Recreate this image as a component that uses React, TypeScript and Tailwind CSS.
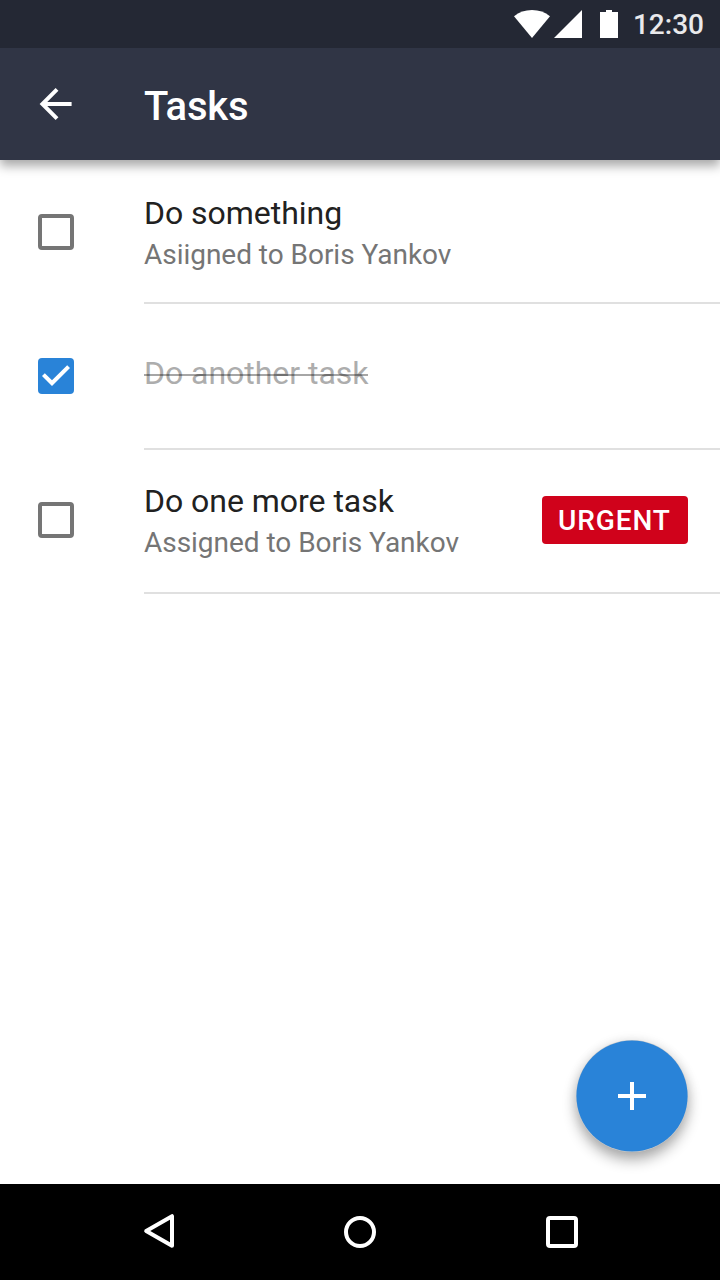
type Task = {
  title: string;
  note?: string;
  done?: boolean;
  urgent?: boolean;
  row: string;
  box: string;
  text: string;
};

const tasks: Task[] = [
  { title: "Do something", note: "Asiigned to Boris Yankov", row: "h-[144px]", box: "mt-[54px]", text: "pt-[33px]" },
  { title: "Do another task", done: true, row: "h-[146px]", box: "mt-[54px]", text: "pt-[49px]" },
  { title: "Do one more task", note: "Assigned to Boris Yankov", urgent: true, row: "h-[144px]", box: "mt-[52px]", text: "pt-[31px]" },
];

function StatusBar() {
  return (
    <div className="relative z-20 flex h-12 items-start justify-end bg-[#242834] pr-4">
      <svg className="mt-[10px] h-7 w-9" viewBox="0 0 36 28" fill="#fff">
        <path d="M18 28 0 6.2C5 2 11 0 18 0s13 2 18 6.2z" />
      </svg>
      <svg className="mt-[10px] ml-1 h-7 w-7" viewBox="0 0 28 28" fill="#fff">
        <path d="M0 28 28 0V28z" />
      </svg>
      <svg className="mt-[10px] ml-[18px] h-7 w-[18px]" viewBox="0 0 18 28" fill="#fff">
        <path d="M0 2H6V0H12V2H18V28H0z" />
      </svg>
      <span className="ml-[15px] text-[28px] leading-[50px] font-medium text-[#e9e9eb]">12:30</span>
    </div>
  );
}

function AppBar() {
  return (
    <header className="relative z-10 flex h-28 bg-[#303545] pl-8 text-white shadow-[0_6px_10px_rgba(0,0,0,0.34)]">
      <svg className="mt-8 h-12 w-12" viewBox="0.2 0 24 24" fill="currentColor">
        <path d="M20 11H7.83l5.59-5.59L12 4l-8 8 8 8 1.41-1.41L7.83 13H20v-2z" />
      </svg>
      <h1 className="ml-16 pt-[31px] text-[40px] leading-[56px] font-medium tracking-[-0.2px]">Tasks</h1>
    </header>
  );
}

function Checkbox({ checked }: { checked?: boolean }) {
  return checked ? (
    <div className="h-9 w-9 rounded-[4px] bg-[#2983d8]">
      <svg className="h-9 w-9" viewBox="3 3 18 18" fill="#fff">
        <path d="M10 17l-5-5 1.41-1.41L10 14.17l7.59-7.59L19 8z" />
      </svg>
    </div>
  ) : (
    <div className="h-9 w-9 rounded-[4px] border-4 border-[#757575]" />
  );
}

function TaskRow({ task }: { task: Task }) {
  return (
    <li className={`flex pl-[38px] ${task.row}`}>
      <div className={task.box}>
        <Checkbox checked={task.done} />
      </div>
      <div className="ml-[70px] flex flex-1 border-b-2 border-[#e0e0e0] pr-8">
        <div className={`flex-1 ${task.text}`}>
          <p className={`text-[32px] leading-10 tracking-[-0.03px] ${task.done ? "text-[#adadad]" : "text-[#212121]"}`}>
            {task.done ? (
              <span className="relative inline-block">
                {task.title}
                <span className="absolute top-[21px] left-0 h-[2px] w-[224px] bg-black/35" />
              </span>
            ) : (
              task.title
            )}
          </p>
          {task.note && <p className="mt-[2px] text-[28px] leading-10 tracking-[-0.03px] text-[#757575]">{task.note}</p>}
        </div>
        {task.urgent && (
          <span className="mt-[46px] flex h-12 w-[146px] rounded-[4px] bg-[#d0021b] pl-4 text-[28px] leading-[49px] font-medium tracking-[0.9px] text-white">
            URGENT
          </span>
        )}
      </div>
    </li>
  );
}

function NavBar() {
  return (
    <nav className="flex h-24 items-center bg-black pl-[142px]">
      <svg className="h-10 w-9" viewBox="0 0 36 40" fill="none" stroke="#fff" strokeWidth="4" strokeLinejoin="round">
        <path d="M30 4.2V33.8L4.2 19z" />
      </svg>
      <svg className="ml-[166px] h-8 w-8" viewBox="0 0 32 32" fill="none" stroke="#fff" strokeWidth="4">
        <circle cx="16" cy="16" r="14" />
      </svg>
      <div className="ml-[170px] h-8 w-8 rounded-[4px] border-4 border-white" />
    </nav>
  );
}

export default function App() {
  return (
    <div className="relative flex h-[1280px] w-[720px] flex-col overflow-hidden bg-white font-['Roboto',sans-serif]">
      <StatusBar />
      <AppBar />
      <ul className="flex-1">
        {tasks.map((task) => (
          <TaskRow key={task.title} task={task} />
        ))}
      </ul>
      <NavBar />
      <button className="absolute right-8 bottom-32 h-28 w-28 rounded-full bg-black/20 shadow-[0_8px_14px_rgba(0,0,0,0.32),0_0_12px_rgba(0,0,0,0.08)]">
        <svg className="h-28 w-28" viewBox="0 0 112 112" fill="#fff">
          <circle cx="56" cy="56" r="55.6" fill="#2983d8" />
          <path d="M54 42h4v12h12v4H58v12h-4V58H42v-4h12z" />
        </svg>
      </button>
    </div>
  );
}
